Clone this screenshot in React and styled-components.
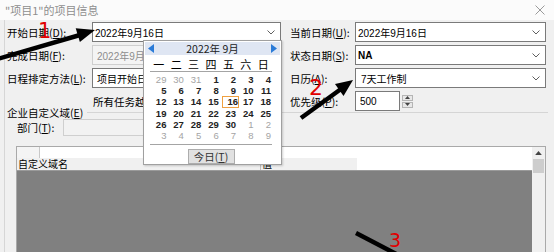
import React from "react";
import styled, { createGlobalStyle } from "styled-components";

const GlobalStyle = createGlobalStyle`
html, body {
  margin: 0;
  padding: 0;
  background: #f0f0f0;
}
body {
  font-family: "Noto Sans CJK SC", "Noto Sans", sans-serif;
  font-size: 10.5px;
  color: #000;
}
`

const Window = styled.div`
position: relative;
width: 554px;
height: 252px;
overflow: hidden;
background: #f0f0f0;
`
const TitleBar = styled.div`
height: 20px;
display: flex;
align-items: center;
justify-content: space-between;
padding: 0 9px 0 5px;
background: #fbfbfb;
color: #8e8e8e;
font-size: 11px;
`
const Body = styled.div`
margin-left: 4px;
border-left: 1px solid #d6d6d6;
padding: 2px 6px 0 2px;
height: 232px;
`
const FormGrid = styled.div`
display: grid;
grid-template-columns: 85px 189px 9px 65px 191px;
grid-auto-rows: 20px;
row-gap: 3px;
align-items: center;
`
const Label = styled.span`
grid-column: ${({ col }) => col};
white-space: nowrap;
`
const Field = styled.div`
grid-column: ${({ col }) => col};
height: 20px;
box-sizing: border-box;
display: flex;
align-items: center;
justify-content: space-between;
padding: 0 5px 0 ${({ indent }) => indent || 2}px;
background: ${({ disabled }) => (disabled ? "#f4f4f4" : "#fff")};
border: 1px solid ${({ disabled }) => (disabled ? "#cfcfcf" : "#7a7a7a")};
color: ${({ disabled }) => (disabled ? "#8d8d8d" : "#000")};
font-family: "Liberation Sans", "Noto Sans CJK SC", sans-serif;
font-size: 10px;
white-space: nowrap;
overflow: hidden;
`
const Note = styled.span`
grid-column: 2;
padding-left: 1px;
white-space: nowrap;
`
const SpinWrap = styled.div`
grid-column: 5;
display: flex;
align-items: center;
gap: 2px;
`
const SpinInput = styled.div`
width: 45px;
height: 20px;
box-sizing: border-box;
border: 1px solid #7a7a7a;
background: #fff;
display: flex;
align-items: center;
padding-left: 4px;
font-family: "Liberation Sans", sans-serif;
font-size: 10px;
`
const SpinButtons = styled.div`
display: flex;
flex-direction: column;
gap: 1px;
`
const SpinBtn = styled.div`
width: 11px;
height: 6px;
box-sizing: border-box;
border: 1px solid #b5b5b5;
background: #e8e8e8;
display: flex;
align-items: center;
justify-content: center;
`
const GroupHeader = styled.div`
margin-top: -5px;
height: 12px;
display: flex;
align-items: center;
gap: 4px;
white-space: nowrap;
&::after {
  content: "";
  flex: 1;
  border-top: 1px solid #d5d5d5;
}
`
const DeptRow = styled.div`
margin-top: 1px;
padding-left: 10px;
height: 17px;
display: flex;
align-items: center;
`
const DeptLabel = styled.span`
width: 46px;
white-space: nowrap;
`
const DeptInput = styled.div`
width: 200px;
height: 17px;
box-sizing: border-box;
border: 1px solid #cfcfcf;
background: #f2f2f2;
`
const Table = styled.div`
margin: 10px 0 0 9px;
width: 530px;
height: 120px;
box-sizing: border-box;
border: 1px solid #a9a9a9;
border-bottom: none;
display: grid;
grid-template-columns: 1fr 13px;
`
const TableMain = styled.div`
display: flex;
flex-direction: column;
`
const EntryRow = styled.div`
height: 11px;
display: flex;
background: #fff;
`
const EntryCell = styled.div`
width: 22px;
background: #f4f4f4;
border-right: 1px solid #c8c8c8;
`
const HeaderRow = styled.div`
height: 12px;
display: flex;
background: #fff;
border-bottom: 1px solid #9a9a9a;
`
const HeaderCell = styled.div`
width: ${({ w }) => w}px;
box-sizing: border-box;
background: #f0f0f0;
border-right: ${({ sep }) => (sep ? "1px solid #c0c0c0" : "none")};
padding-left: 1px;
line-height: 12px;
font-size: 10px;
white-space: nowrap;
`
const GridArea = styled.div`
flex: 1;
background: #808080;
`
const Scrollbar = styled.div`
background: #f0f0f0;
display: flex;
flex-direction: column;
align-items: center;
`
const ScrollArrow = styled.div`
height: 12px;
display: flex;
align-items: center;
justify-content: center;
`
const Thumb = styled.div`
width: 11px;
height: 14px;
background: #cdcdcd;
`

const Popup = styled.div`
position: absolute;
left: 143px;
top: 40px;
width: 139px;
height: 125px;
box-sizing: border-box;
background: #fff;
border: 1px solid #a0a0a0;
box-shadow: 1px 1px 2px rgba(0, 0, 0, 0.18);
padding: 1px 9px 0 6px;
`
const CalHead = styled.div`
margin: 0 -8px 0 -5px;
height: 13px;
display: flex;
align-items: center;
justify-content: space-between;
padding: 0 3px;
background: #dfe6f3;
font-size: 10.5px;
color: #222;
`
const Weekdays = styled.div`
margin-top: 3px;
display: grid;
grid-template-columns: repeat(7, 1fr);
height: 12px;
padding-bottom: 1px;
border-bottom: 1px solid #a4a4a4;
font-size: 11px;
line-height: 12px;
text-align: center;
`
const Days = styled.div`
margin-top: 2px;
display: grid;
grid-template-columns: repeat(7, 1fr);
grid-auto-rows: 11.2px;
`
const Day = styled.div`
text-align: right;
padding-right: 1px;
font-family: "Liberation Sans", sans-serif;
font-size: 9.5px;
line-height: 11px;
font-weight: ${({ muted }) => (muted ? 400 : 700)};
color: ${({ muted }) => (muted ? "#a4a4a4" : "#222")};
box-shadow: ${({ today }) => (today ? "inset 0 0 0 1px #f0a040" : "none")};
margin-left: ${({ today }) => (today ? "2px" : "0")};
margin-right: ${({ today }) => (today ? "-2px" : "0")};
`
const CalFoot = styled.div`
margin-top: 3px;
border-top: 1px solid #a4a4a4;
display: flex;
justify-content: center;
padding-top: 4px;
`
const TodayBtn = styled.div`
width: 47px;
height: 15px;
box-sizing: border-box;
background: #e1e1e1;
border: 1px solid #adadad;
display: flex;
align-items: center;
justify-content: center;
font-size: 10.5px;
color: #333;
`
const Overlay = styled.svg`
position: absolute;
left: 0;
top: 0;
pointer-events: none;
`

const Chevron = () => (
  <svg width="8" height="5" viewBox="0 0 8 5">
    <polyline points="0.5,0.5 4,4 7.5,0.5" fill="none" stroke="#606060" strokeWidth="1" />
  </svg>
);

const Tri = ({ dir, color = "#444", w = 5, h = 3 }) => (
  <svg width={w} height={h} viewBox="0 0 10 6">
    <polygon points={dir === "up" ? "0,6 5,0 10,6" : "0,0 10,0 5,6"} fill={color} />
  </svg>
);

const Side = ({ dir }) => (
  <svg width="6" height="9" viewBox="0 0 6 9">
    <polygon points={dir === "left" ? "6,0 0,4.5 6,9" : "0,0 6,4.5 0,9"} fill="#2b7bd8" />
  </svg>
);

const Lbl = ({ text, k, colon = true }) => (
  <>
    {text}(<u>{k}</u>){colon ? ":" : ""}
  </>
);

const weekdays = ["一", "二", "三", "四", "五", "六", "日"];
const days = [
  [29, 1], [30, 1], [31, 1], [1], [2], [3], [4],
  [5], [6], [7], [8], [9], [10], [11],
  [12], [13], [14], [15], [16], [17], [18],
  [19], [20], [21], [22], [23], [24], [25],
  [26], [27], [28], [29], [30], [1, 1], [2, 1],
  [3, 1], [4, 1], [5, 1], [6, 1], [7, 1], [8, 1], [9, 1],
];

const Calendar = () => (
  <Popup>
    <CalHead>
      <Side dir="left" />
      <span>2022年 9月</span>
      <Side dir="right" />
    </CalHead>
    <Weekdays>
      {weekdays.map((w) => (
        <span key={w}>{w}</span>
      ))}
    </Weekdays>
    <Days>
      {days.map(([d, m], i) => (
        <Day key={i} muted={!!m} today={!m && d === 16}>
          {d}
        </Day>
      ))}
    </Days>
    <CalFoot>
      <TodayBtn>
        今日(<u>T</u>)
      </TodayBtn>
    </CalFoot>
  </Popup>
);

const Arrows = () => (
  <Overlay width="554" height="252" viewBox="0 0 554 252">
    <line x1="-6" y1="60" x2="80" y2="35" stroke="#000" strokeWidth="4.5" />
    <polygon points="95,30 75.7,28.2 79.9,42" fill="#000" />
    <text x="38" y="38" fill="#e00000" fontSize="21" fontFamily="DejaVu Sans, sans-serif">1</text>

    <line x1="301" y1="118" x2="341" y2="89" stroke="#000" strokeWidth="4.5" />
    <polygon points="353,80 335,84 343.5,96" fill="#000" />
    <text x="309" y="95" fill="#e00000" fontSize="22" fontFamily="DejaVu Sans, sans-serif">2</text>

    <line x1="356" y1="233" x2="402" y2="257" stroke="#000" strokeWidth="4.5" />
    <text x="389" y="247" fill="#e00000" fontSize="19" fontFamily="DejaVu Sans, sans-serif">3</text>
  </Overlay>
);

const App = () => {
  return (
    <Window>
      <GlobalStyle />
      <TitleBar>
        <span>"项目1"的项目信息</span>
        <svg width="10" height="10" viewBox="0 0 10 10">
          <path d="M0.5 0.5 L9.5 9.5 M9.5 0.5 L0.5 9.5" stroke="#9a9a9a" strokeWidth="1" />
        </svg>
      </TitleBar>
      <Body>
        <FormGrid>
          <Label col={1}><Lbl text="开始日期" k="D" /></Label>
          <Field col={2}>2022年9月16日<Chevron /></Field>
          <Label col={4}><Lbl text="当前日期" k="U" /></Label>
          <Field col={5}>2022年9月16日<Chevron /></Field>

          <Label col={1}><Lbl text="完成日期" k="F" /></Label>
          <Field col={2} disabled indent={4}>2022年9月16日<Chevron /></Field>
          <Label col={4}><Lbl text="状态日期" k="S" /></Label>
          <Field col={5}><b>NA</b><Chevron /></Field>

          <Label col={1}><Lbl text="日程排定方法" k="L" /></Label>
          <Field col={2} indent={4}>项目开始日期<Chevron /></Field>
          <Label col={4}><Lbl text="日历" k="A" /></Label>
          <Field col={5} indent={5}>7天工作制<Chevron /></Field>

          <Note>所有任务越快开始越好。</Note>
          <Label col={4}><Lbl text="优先级" k="P" /></Label>
          <SpinWrap>
            <SpinInput>500</SpinInput>
            <SpinButtons>
              <SpinBtn><Tri dir="up" /></SpinBtn>
              <SpinBtn><Tri dir="down" /></SpinBtn>
            </SpinButtons>
          </SpinWrap>
        </FormGrid>

        <GroupHeader>
          <span><Lbl text="企业自定义域" k="E" colon={false} /></span>
        </GroupHeader>
        <DeptRow>
          <DeptLabel><Lbl text="部门" k="T" /></DeptLabel>
          <DeptInput />
        </DeptRow>

        <Table>
          <TableMain>
            <EntryRow>
              <EntryCell />
            </EntryRow>
            <HeaderRow>
              <HeaderCell w={244} sep>自定义域名</HeaderCell>
              <HeaderCell w={96}>值</HeaderCell>
            </HeaderRow>
            <GridArea />
          </TableMain>
          <Scrollbar>
            <ScrollArrow><Tri dir="up" w={7} h={4} /></ScrollArrow>
            <Thumb />
          </Scrollbar>
        </Table>
      </Body>
      <Calendar />
      <Arrows />
    </Window>
  );
};

export default App;
